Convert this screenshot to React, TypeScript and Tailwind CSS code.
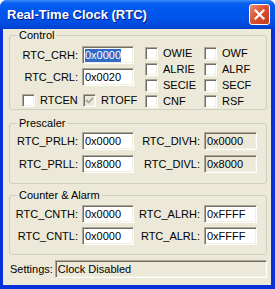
import React from "react";

const sunken =
  "border border-t-[#ACA899] border-l-[#ACA899] border-b-white border-r-white shadow-[inset_1px_1px_0_#716F64,inset_-1px_-1px_0_#F1EFE2]";

function Edit({
  value,
  width = "w-[52px]",
  disabled,
  selected,
}: {
  value: string;
  width?: string;
  disabled?: boolean;
  selected?: boolean;
}) {
  return (
    <div
      className={`${sunken} ${width} h-[18px] flex items-center pl-[2px] ${
        disabled ? "bg-[#ECE9D8]" : "bg-white"
      }`}
    >
      {selected ? (
        <span className="bg-[#316AC5] text-white leading-[13px]">{value}</span>
      ) : (
        <span className="leading-[13px]">{value}</span>
      )}
    </div>
  );
}

function Check({ label, checked, disabled }: { label: string; checked?: boolean; disabled?: boolean }) {
  return (
    <div className="flex items-center h-[13px]">
      <div
        className={`${sunken} w-[13px] h-[13px] flex items-center justify-center ${
          disabled ? "bg-[#ECE9D8]" : "bg-white"
        }`}
      >
        {checked && (
          <svg width="9" height="9" viewBox="0 0 9 9">
            <polyline
              points="1,4 3.5,6.5 8,2"
              fill="none"
              stroke={disabled ? "#ACA899" : "#000"}
              strokeWidth="1.8"
            />
          </svg>
        )}
      </div>
      <span className="ml-[5px] leading-[13px]">{label}</span>
    </div>
  );
}

function Field({ label, value, w = "w-[72px]", disabled, selected }: {
  label: string;
  value: string;
  w?: string;
  disabled?: boolean;
  selected?: boolean;
}) {
  return (
    <div className="flex items-center">
      <span className={`${w} text-right pr-[4px] leading-[13px]`}>{label}</span>
      <Edit value={value} disabled={disabled} selected={selected} width={disabled || w !== "w-[72px]" ? "w-[53px]" : "w-[52px]"} />
    </div>
  );
}

function Group({ title, className, children }: { title: string; className?: string; children: React.ReactNode }) {
  return (
    <fieldset className={`ml-[6px] mr-[4px] border border-[#D0D0BF] rounded-[3px] ${className ?? ""}`}>
      <legend className="ml-[7px] px-[2px] leading-[13px]">{title}</legend>
      {children}
    </fieldset>
  );
}

export default function App() {
  return (
    <div className="w-[275px] h-[289px] bg-white font-['Liberation_Sans',Arial,sans-serif] text-[11px] text-black">
      <div className="w-full h-full flex flex-col rounded-t-[7px] overflow-hidden bg-[#0831D9]">
        {/* title bar */}
        <div className="h-[29px] shrink-0 flex items-center justify-between pl-[7px] pr-[5px] bg-[linear-gradient(to_bottom,#3D8EF8_0px,#0A62F2_3px,#0058EE_8px,#0055EA_18px,#0049DC_25px,#003FCB_29px)]">
          <span className="text-white font-bold text-[13px] leading-[16px] [text-shadow:1px_1px_0_#0A1883]">
            Real-Time Clock (RTC)
          </span>
          <div className="w-[21px] h-[21px] rounded-[3px] border border-white bg-[linear-gradient(135deg,#E98B6E,#D8502E_50%,#C13A1C)] flex items-center justify-center">
            <svg width="11" height="11" viewBox="0 0 11 11">
              <path d="M1.5 1.5 L9.5 9.5 M9.5 1.5 L1.5 9.5" stroke="#fff" strokeWidth="2.2" strokeLinecap="square" />
            </svg>
          </div>
        </div>

        {/* client area */}
        <div className="flex-1 ml-[3px] mr-[4px] mb-[4px] bg-[#ECE9D8] flex flex-col">
          <Group title="Control" className="pb-[1px]">
            <div className="flex">
              <div className="w-[135px] flex flex-col pt-[4px]">
                <Field label="RTC_CRH:" value="0x0000" selected />
                <div className="mt-[4px]">
                  <Field label="RTC_CRL:" value="0x0020" />
                </div>
                <div className="flex mt-[8px] pl-[12px]">
                  <div className="w-[61px]">
                    <Check label="RTCEN" />
                  </div>
                  <Check label="RTOFF" checked disabled />
                </div>
              </div>
              <div className="grid grid-cols-[59px_auto] gap-y-[3px] pt-[5px]">
                <Check label="OWIE" />
                <Check label="OWF" />
                <Check label="ALRIE" />
                <Check label="ALRF" />
                <Check label="SECIE" />
                <Check label="SECF" />
                <Check label="CNF" />
                <Check label="RSF" />
              </div>
            </div>
          </Group>

          <Group title="Prescaler" className="mt-[7px] pt-[2px] pb-[10px]">
            <div className="flex">
              <Field label="RTC_PRLH:" value="0x0000" />
              <Field label="RTC_DIVH:" value="0x0000" w="w-[70px]" disabled />
            </div>
            <div className="flex mt-[5px]">
              <Field label="RTC_PRLL:" value="0x8000" />
              <Field label="RTC_DIVL:" value="0x8000" w="w-[70px]" disabled />
            </div>
          </Group>

          <Group title="Counter &amp; Alarm" className="mt-[5px] pt-[3px] pb-[9px]">
            <div className="flex">
              <Field label="RTC_CNTH:" value="0x0000" />
              <Field label="RTC_ALRH:" value="0xFFFF" w="w-[70px]" />
            </div>
            <div className="flex mt-[4px]">
              <Field label="RTC_CNTL:" value="0x0000" />
              <Field label="RTC_ALRL:" value="0xFFFF" w="w-[70px]" />
            </div>
          </Group>

          <div className="flex items-center mt-[5px] pl-[7px] mr-[4px]">
            <span className="leading-[13px] pr-[2px]">Settings:</span>
            <div className={`${sunken} flex-1 h-[18px] flex items-center pl-[2px] bg-[#ECE9D8]`}>
              <span className="leading-[13px]">Clock Disabled</span>
            </div>
          </div>
        </div>
      </div>
    </div>
  );
}
